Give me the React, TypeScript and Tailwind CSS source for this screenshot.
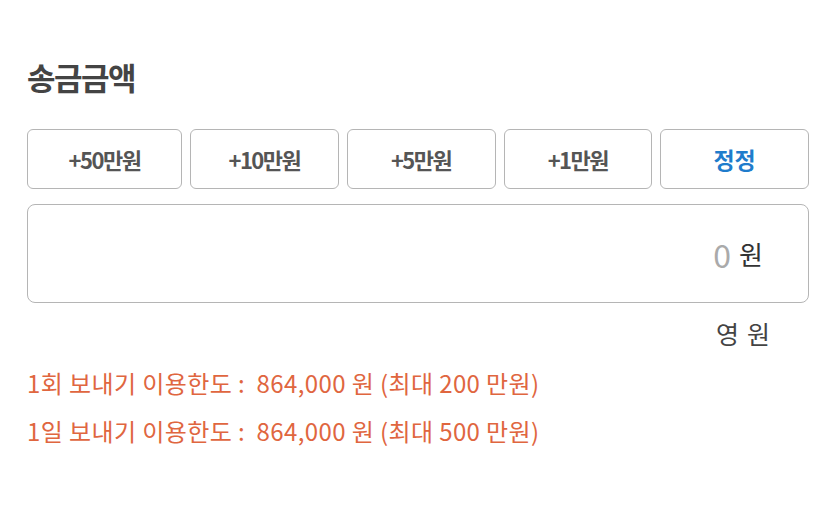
const amounts = ['+50만원', '+10만원', '+5만원', '+1만원'];

export default function App() {
  return (
    <div
      className="w-[835px] h-[505px] bg-white pl-[27px] pr-[26px] pt-[56px]"
      style={{ fontFamily: '"Noto Sans CJK KR", "Noto Sans", sans-serif' }}
    >
      <h2 className="text-[31px] font-bold text-[#444] leading-[42px] tracking-[-1.5px]">송금금액</h2>

      <div className="mt-[31px] grid grid-cols-[155px_1fr_1fr_1fr_1fr] gap-[8px]">
        {amounts.map((a) => (
          <button
            key={a}
            className="h-[60px] rounded-[6px] border border-[#b5b5b5] bg-white text-[22px] font-bold text-[#555] tracking-[-1.5px]"
          >
            {a}
          </button>
        ))}
        <button className="h-[60px] rounded-[6px] border border-[#b5b5b5] bg-white text-[23px] font-bold text-[#1f7ccc]">
          정정
        </button>
      </div>

      <div className="mt-[15px] h-[99px] rounded-[8px] border border-[#b5b5b5] flex items-center justify-end pr-[45px]">
        <span className="text-[32px] text-[#aaa] tracking-[-2px]">0</span>
        <span className="ml-[10px] text-[26px] text-[#333]">원</span>
      </div>

      <div className="mt-[12px] pr-[39px] flex justify-end gap-[8px] text-[25px] text-[#444] leading-[36px]">
        <span>영</span>
        <span>원</span>
      </div>

      <div className="mt-[14px] space-y-[12px] text-[24px] text-[#e0663f] leading-[36px] tracking-[0.4px]">
        <p>1회 보내기 이용한도 :&nbsp;&nbsp;864,000 원 (최대 200 만원)</p>
        <p>1일 보내기 이용한도 :&nbsp;&nbsp;864,000 원 (최대 500 만원)</p>
      </div>
    </div>
  );
}
